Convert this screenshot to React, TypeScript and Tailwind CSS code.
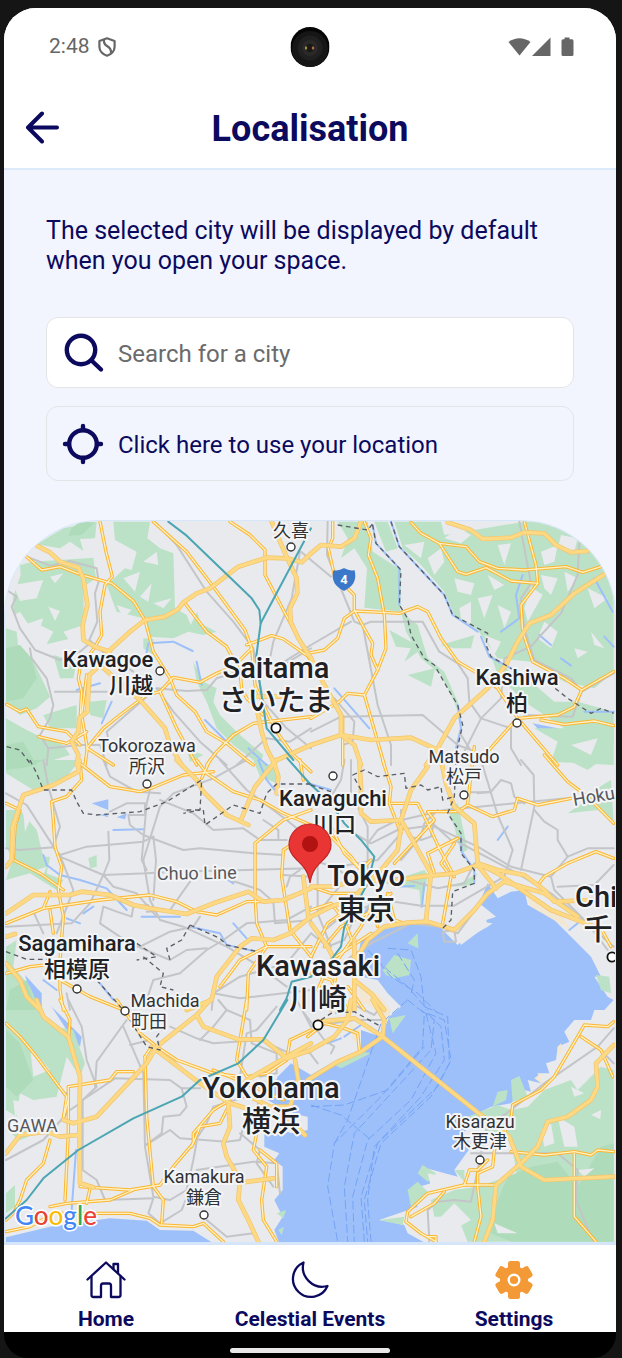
import React from "react";

type Tile = {
  x: number;
  y: number;
  green?: string[];
  forest?: string[];
  land?: string[];
  water?: string[];
  beige?: string[];
  river?: string[];
  rail?: string[];
  road?: string[];
  highway?: string[];
  bullet?: string[];
  border?: string[];
  ferry?: string[];
};

// Each tile is drawn on its own 933-unit grid, three units to a map pixel.
const tiles: Tile[] = [
  {
    x: 0,
    y: 1545,
    green: [
      "110,88 190,40 290,20 285,70 240,72 250,108 210,80 180,100",
      "340,20 450,20 442,70 480,100 520,115 525,280 560,300 572,330 592,290 600,325 650,350 610,360 565,350 520,370 450,365 430,310 350,290 320,210 375,160 395,165 410,110 345,75",
      "60,150 100,140 280,128 288,190 250,215 252,330 190,350 205,372 140,388 160,350 120,330 90,335 60,290 42,300 38,250 62,180",
      "18,340 50,350 55,400 95,430 130,500 150,545 110,580 60,600 18,560",
      "160,420 230,440 220,490 180,490",
      "270,560 320,555 310,610 270,600",
      "130,600 230,570 230,640 150,640",
      "18,610 70,640 110,660 190,690 210,720 110,750 18,750",
      "580,440 610,500 650,520 640,560 660,600 720,660 790,720 780,750 700,690 650,640 620,560 590,500",
      "560,700 610,720 570,740",
      "430,370 460,372 460,420 430,400",
    ],
    forest: ["18,400 60,390 95,430 110,490 70,550 18,560", "215,40 240,20 285,22 245,60 205,62", "18,690 70,680 110,750 18,750"],
    land: [
      "40,210 130,195 110,250 60,258",
      "145,275 180,288 165,318",
      "370,190 420,170 405,230",
      "420,245 455,205 445,260",
      "430,140 470,110 475,150",
      "460,265 515,250 490,280",
      "70,330 130,310 110,370",
      "150,185 190,175 165,205",
      "350,270 395,285 370,310",
    ],
    river: ["438,422 445,385 520,380 578,408", "590,440 605,510", "335,560 305,625", "615,615 690,690", "745,700 800,750", "230,525 300,505"],
    rail: [
      "20,225 50,245 35,275 60,340 105,405 180,435 240,410 270,385",
      "80,125 150,152 210,138 290,160 296,200 285,235 292,320 268,375 320,420 400,470",
      "470,25 530,90 620,230 700,320 760,400 790,560 860,640 933,700",
      "90,400 95,430 140,490 160,570 150,610 120,660 145,700 140,750",
      "165,530 320,530",
      "470,520 560,528 620,525 650,490 700,475",
      "440,545 320,650 330,690",
      "470,520 520,590 600,680 680,750",
      "900,110 875,250 820,380 800,480",
      "145,700 240,690 300,690 320,750",
      "710,750 800,670 870,680 933,640",
      "850,450 933,400",
    ],
    road: [
      "300,20 318,110 337,185 315,210 300,290 305,360 285,395 240,460 235,490 245,530 240,620",
      "80,125 125,165 180,155 240,178 335,205 400,258 435,315 460,410 510,490 530,540 585,590 620,650 680,685 740,735 760,750",
      "460,20 560,110 640,215 735,345 755,400 765,510 800,590 830,650 880,720 933,770",
      "555,265 620,350 680,395 720,470 725,520 740,550 790,600",
      "690,20 750,60 795,105 795,180 850,285 933,440",
      "740,390 815,362 850,372 933,430",
      "755,400 700,455 650,475 600,502 520,487 480,530 440,540 360,600 310,640 260,700",
      "480,530 530,640 590,750",
      "260,480 245,600 262,700 255,750",
      "20,568 60,590 80,582 115,635 200,650 240,690",
      "115,665 200,685 260,650",
      "262,700 340,750",
      "620,750 650,710 700,660 760,625 933,605",
    ],
    highway: [
      "110,92 150,112 180,140 235,158 250,190 262,270 248,330 250,375 285,395 330,410",
      "933,115 905,142 860,130 800,128 715,155 630,220 590,235 550,262 535,282 495,305 435,315 390,350 330,405 300,450 268,480 262,590 238,610 235,650 215,680 235,720 230,750",
      "815,20 840,80 862,130 890,190 892,235 870,280 872,320 895,370 933,430",
      "300,450 340,485 420,555 460,600 495,640 510,690 545,750",
      "770,580 785,650 800,700 820,740 933,690",
      "770,545 850,545",
    ],
    bullet: ["505,20 560,62 755,250 778,285 782,325 768,430 780,510 800,640 880,735", "933,40 782,325"],
    border: ["20,695 60,705 90,745"],
  },
  {
    x: 933,
    y: 1545,
    green: [
      "80,20 170,20 185,110 270,165 268,290 160,278 168,160 130,100 90,130 110,70",
      "190,20 230,20 260,100 225,110",
      "250,20 390,20 400,60 640,20 830,20 880,130 908,230 908,470 850,520 760,500 660,440 560,430 500,345 430,300 400,230 330,150 275,100",
      "270,290 320,330 350,430 400,470 440,560 450,620 430,560 390,480 330,430 285,350",
      "235,345 335,400 280,440 300,400 255,395",
      "290,480 372,460 360,515",
      "390,390 490,360 480,400 430,400",
      "540,420 660,500 730,560 800,560 908,590 908,690 760,640 640,560 560,480",
      "670,640 908,640 908,750 720,740 740,680",
    ],
    land: [
      "280,90 340,80 330,130",
      "350,130 390,100 400,140 370,180",
      "430,190 490,205 480,240 440,230",
      "445,280 480,260 480,330 450,310",
      "500,250 545,240 520,310",
      "530,180 580,210 550,225",
      "560,90 600,85 580,150",
      "690,110 740,90 730,140 700,150",
      "750,60 800,70 790,110 740,100",
      "690,180 740,190 720,240 700,220",
      "660,215 695,240 650,320 640,280",
      "760,170 800,190 770,230",
      "830,220 890,250 850,280",
      "700,320 740,350 720,400 680,370",
      "790,400 830,410 800,430",
      "840,350 880,400 850,390",
      "560,270 600,290 580,340",
      "520,360 570,380 550,420",
      "400,70 440,40 480,60 450,85",
      "580,450 650,490 630,520",
      "780,690 860,670 840,720",
    ],
    water: ["665,625 740,640 800,665 825,690 760,672 690,650", "670,340 690,340 685,365"],
    river: [
      "240,20 265,95 330,165 400,240 425,300 500,350",
      "185,30 195,85 265,160 265,270",
      "440,570 450,640 430,720",
      "510,365 535,425 600,460",
      "635,180 615,240 625,310 570,350",
      "685,360 720,390",
      "850,190 905,290",
      "880,365 908,395",
      "750,430 780,452",
      "70,520 175,640",
      "820,590 908,590",
    ],
    rail: [
      "50,20 48,120 110,270 130,320 155,330 200,570 240,690 240,750",
      "-30,110 60,185",
      "-80,440 0,390 120,320",
      "155,330 180,320 335,320 385,410 440,445 470,490 475,560 510,610 600,640 600,700 630,750",
      "805,85 800,180 750,295 690,360 660,395 580,430 570,550 510,610 460,710",
      "625,20 660,205 630,250 640,340 670,435 780,490 812,530 785,605 640,600",
      "0,650 90,605 335,600 440,690 480,705",
      "70,550 130,620 125,680 95,690",
      "812,530 908,475",
      "450,660 475,700",
    ],
    road: [
      "65,20 65,70 52,100 70,180 130,240 130,285 165,350 185,385 180,420 200,465 160,540 180,610 220,750",
      "160,20 180,70 172,120 200,190 220,300 225,400 200,465",
      "-10,415 40,405 80,370 100,310 130,288 215,292 265,295 320,275 350,290 390,370 440,440 500,475 560,520 620,610 740,750",
      "300,22 330,55 385,85 465,95 505,140 560,160 640,165 765,155 815,172 870,155",
      "385,85 440,170 465,178 525,158 600,198 680,205 675,150 640,20",
      "680,205 630,270 635,350 665,440 760,490 812,525 908,470",
      "812,525 790,575 740,600 620,610",
      "530,710 610,620",
      "690,615 760,628 850,618 908,632",
      "160,540 110,535 85,560 0,610",
      "95,605 95,750",
    ],
    highway: [
      "0,115 30,90 90,95 130,70 150,20",
      "410,22 480,45 515,72 600,68 640,52 700,55 735,90 780,112 830,108",
      "880,178 790,235 720,300 655,325 620,380 585,450 530,520 430,610 380,700 345,750",
      "0,430 40,510 90,600 90,660 180,675 300,668 370,700",
      "0,690 90,660 130,690 150,750",
    ],
    border: [
      "80,30 170,45 190,20",
      "185,30 195,85 270,165 265,270 290,310 300,360 340,430 370,450 410,520 440,570 455,630 430,740",
      "240,20 265,95 400,240 425,300 530,355 525,390 540,425 600,460 720,510 770,550 840,595 870,580 908,595",
    ],
  },
  {
    x: 0,
    y: 2280,
    green: [
      "18,0 240,0 200,50 100,90 18,40",
      "18,150 60,150 110,210 130,290 40,300 18,260",
      "40,290 150,290 140,340 190,360 170,390 90,340 18,360",
      "265,295 290,285 290,320 270,325",
      "18,560 50,540 40,620 90,680 120,750 18,750",
      "760,0 830,20 830,70 780,50",
    ],
    forest: ["18,0 130,0 90,20 18,30", "30,690 80,660 110,750 18,750"],
    land: ["70,160 90,180 75,215", "110,330 140,320 130,345"],
    water: ["275,130 325,118 325,150 300,140", "300,165 320,160 325,172", "350,172 380,160 375,178", "75,645 125,700 125,750 105,740"],
    river: ["130,285 140,315 180,345 240,360 320,385 380,450", "425,470 540,470", "570,500 660,520 680,555 770,575", "700,490 740,535", "340,210 430,208", "200,475 240,490", "130,660 170,690", "775,0 800,60 840,110", "670,350 700,370", "300,670 340,720", "250,460 280,440"],
    rail: [
      "18,100 80,135 180,290 310,345 440,340 520,335 930,325",
      "130,0 145,80 180,200 160,260",
      "18,265 60,270 160,262 180,285",
      "180,285 260,260 430,245 460,230",
      "310,0 330,50 410,95 480,100",
      "740,0 640,55 520,100 480,140 430,300 450,420 480,480 550,500 680,560 780,620 860,680",
      "450,90 440,130 425,300 440,330",
      "325,215 328,300 310,345 270,430 215,490 18,500",
      "480,120 580,160 640,210 730,205 780,240 860,240",
      "330,155 380,130 435,130 435,165 385,165 390,195 430,225 550,270 600,265 760,280 850,285",
      "180,285 220,390 170,520",
      "310,345 340,380 410,400 470,470",
      "310,440 350,455 395,470 400,440 445,435",
      "310,440 300,490 390,550 510,600 560,570 620,565",
      "570,365 510,450 440,455",
      "933,440 860,480 740,490 670,540 620,570 540,640 460,660 440,720",
      "660,0 740,90 860,180 933,240",
      "690,360 780,390 820,425 825,490 933,480",
      "460,230 468,300 460,420",
      "600,470 580,500 510,515 420,560",
      "790,180 835,210 835,240",
      "635,750 640,700 720,650 860,610 933,520",
      "640,700 720,715 933,690",
      "130,520 100,455",
      "200,700 210,750",
      "850,345 933,350",
      "860,380 870,350 900,330",
    ],
    road: [
      "240,5 245,60 200,110 155,125 160,180 165,260 185,320 175,390 190,470 180,600 180,690 190,750",
      "240,10 330,80 420,95 460,82 550,45 640,35",
      "18,130 60,150 45,200 40,300 120,340 190,390",
      "18,490 130,445 300,420 450,405 530,425 590,455 650,465 740,425 790,425",
      "590,0 620,40 700,95 780,120 850,160 933,195",
      "630,0 605,55",
      "933,150 850,180 765,250 765,400 770,490 800,560 745,640 740,750",
      "880,250 850,270 845,350 870,510 933,590",
      "18,640 90,620 180,610",
      "180,660 270,710 370,750",
      "130,445 150,395",
      "160,520 150,450",
      "933,560 800,560 720,600 660,680",
      "900,0 910,60",
    ],
    highway: [
      "238,0 235,35 160,75 70,105 38,200 35,300 18,320",
      "18,460 100,405 210,405 245,395 330,405 400,435 450,445 560,462 640,430 745,395 790,425 850,420 933,385",
      "530,0 590,60 610,95 680,165 745,195",
      "725,175 765,80 830,0",
      "820,0 835,50 830,100",
      "933,470 870,520 820,540 755,535 720,560 650,650 635,720 560,750",
      "18,530 45,522",
      "18,610 60,660 80,710 120,750",
      "910,350 925,470",
    ],
    bullet: ["862,-5 933,75", "933,650 875,665 860,715 840,750"],
    border: [
      "90,0 110,40 130,90 215,90 230,125 250,160 290,165 420,155 500,125 605,60 600,150 550,160",
      "560,150 610,150 615,195 700,135 780,160 800,100 830,72 933,72",
      "18,575 80,598 150,598",
      "570,495 660,535 680,555 775,575",
      "570,495 545,540 500,565 510,600",
      "410,550 470,590 410,600",
      "430,590 490,640 480,680 520,690",
      "290,660 370,750",
    ],
  },
  {
    x: 933,
    y: 2280,
    green: [
      "770,160 830,120 850,90 900,60 908,190 860,150",
      "770,0 870,0 830,30",
      "410,150 440,130 470,270 450,280 430,200",
      "220,370 340,330 350,345 330,450 325,390",
      "430,380 500,340 480,375",
    ],
    land: ["690,50 730,55 700,90"],
    river: ["450,230 452,275 490,330 490,370", "333,440 340,370", "560,240 590,200", "250,380 310,378", "-10,70 60,90", "775,510 800,490"],
    rail: [
      "100,0 90,60 60,110 0,120",
      "0,210 130,220 180,250 260,210 370,195 430,250",
      "170,250 200,210 250,185 400,150 610,130 800,112",
      "370,200 500,260 600,320 720,350 730,390 850,510 908,560",
      "430,240 600,330 720,400 830,490 890,570",
      "130,350 270,355 380,385 460,370 490,310",
      "250,425 330,437 430,437 580,350",
      "510,0 560,165 605,270 580,350",
      "630,0 668,45 670,140 630,330",
      "500,100 540,95 570,60 600,70 610,110 640,130",
      "670,150 700,185 740,210 740,240 770,290 720,350",
      "770,290 830,265 908,265",
      "908,315 850,375 740,380",
      "470,97 540,97",
      "400,545 395,515 430,510 435,545 400,545",
      "180,550 300,490 390,500 440,520 500,440 580,360",
      "120,0 120,100 170,200 170,330",
      "270,150 270,220 200,300 80,320",
      "0,300 70,320 110,350 20,460",
      "20,300 20,460 60,560",
      "300,230 330,240 360,230 370,180",
      "0,520 50,560 100,540 150,430",
      "0,600 30,520 90,470 220,420",
      "60,640 120,590 180,550",
      "380,150 340,190 330,230 270,300",
    ],
    road: [
      "215,0 240,80 235,130 270,220",
      "240,130 320,130 350,190 385,265 430,350",
      "250,310 370,180 350,155 440,155 470,135 545,170 610,150 620,115 680,135 780,115",
      "490,-40 470,130",
      "700,-15 770,65 830,110 908,190",
      "430,250 390,310 420,350 395,490",
      "370,340 350,280 440,235",
      "908,295 855,275 770,310 700,350 680,375",
      "850,470 900,560",
      "0,200 60,230 120,290 150,330",
      "60,200 100,280 150,330 180,300",
      "0,380 60,400 130,400",
      "40,560 90,500 170,460 240,400",
      "0,450 60,430 100,480 130,560",
      "60,750 80,600 150,500 190,420",
      "0,590 50,490 120,440",
      "20,690 60,600 120,560 180,520",
      "230,400 250,480 280,490",
      "180,430 200,500",
      "0,640 60,660 110,750",
      "110,680 160,750",
    ],
    highway: [
      "130,750 130,660 140,590 170,540 220,500 290,488 350,485 400,500 430,510 490,450 530,400 580,365 700,400 800,470",
      "145,0 150,80 150,160 180,185 270,180 300,90 350,20",
      "390,0 405,70 430,140 490,190 500,310 560,330 640,345 700,390 730,425 850,420",
      "270,180 310,250 360,340 345,480",
      "130,365 260,360 330,350 430,340 500,315 555,385",
      "0,380 60,380 130,365",
      "270,200 260,270 210,330 160,380 120,420",
      "0,490 50,560 80,620",
      "130,540 130,660 180,700 220,750",
      "0,470 60,440 120,420",
      "500,310 560,340 720,450 850,500",
    ],
    bullet: ["-10,65 60,130 100,190 150,240 190,290 170,370 100,500 90,560 60,600", "0,650 20,630"],
    border: [
      "125,45 160,30 200,50 280,40 285,85 330,75 350,90 390,80 395,120 430,110",
      "435,0 430,110 410,160 450,220 450,280 490,330 490,370 425,395 420,480 395,505",
      "150,90 125,45",
      "0,75 60,95",
    ],
  },
  {
    x: 0,
    y: 3000,
    green: [
      "18,0 100,0 160,80 220,90 255,190 240,230 200,170 170,290 100,300 60,280 50,350 18,330",
      "18,580 45,555 45,620 18,640",
      "18,390 60,380 110,400 60,420",
      "830,640 858,630 850,655",
      "835,690 852,680 845,705",
    ],
    forest: ["18,90 60,130 100,240 50,290 18,260"],
    land: ["90,140 150,210 100,230", "40,300 80,310 45,350"],
    water: ["18,712 150,680 330,655 440,662 480,690 580,692 640,730 18,730", "155,20 245,110 240,140 200,90"],
    river: ["228,450 215,630", "200,280 195,330"],
    rail: [
      "205,0 245,80 260,180 290,260 248,300 248,510 290,540 315,600",
      "380,60 290,185 285,260",
      "370,80 430,220 435,440 460,590 510,600 560,570 580,480 590,425",
      "248,300 345,235 510,240 545,265 600,265",
      "545,265 560,320 540,345 490,350 485,400 435,437",
      "435,437 510,390 540,415 680,425 720,420 730,380 820,240",
      "590,510 760,485 830,490 840,580",
      "315,600 460,595 445,640 480,670 545,630 570,570",
      "620,660 680,710 760,700",
      "510,80 590,115 640,130 780,120 870,160",
      "720,230 740,100 770,90 830,20",
      "18,480 130,420 210,330 240,310",
      "655,0 680,30 640,80 600,120",
      "680,30 750,60 755,130 830,160 830,220 780,230",
      "720,400 780,450 770,490 820,560",
      "390,135 450,120",
      "580,430 620,370 640,320 740,290",
      "890,0 933,80",
    ],
    road: [
      "180,0 210,60 205,120",
      "18,70 60,110 110,170 200,290 190,355",
      "205,260 330,240 350,215 400,215",
      "435,170 440,350 460,560",
      "205,260 205,400 195,600",
      "150,420 130,490 80,540 60,600 40,640 18,660",
      "240,560 390,570 480,555 520,500 580,430 580,400 640,330 690,300",
      "575,440 600,380 660,370 680,330",
      "150,620 200,610 330,600 400,570",
      "260,610 270,565",
      "18,695 90,680 160,640 390,640 450,655 480,675 580,680 610,670 670,725",
      "460,560 490,600 485,670",
      "740,0 710,180 740,230 800,220 860,180 870,120 933,90",
      "350,0 420,100 470,140 530,180 640,220 720,230",
      "770,400 760,450 800,500 785,600 790,660 830,725",
      "780,450 830,490 830,560",
      "640,210 760,260 850,300",
      "435,170 455,140",
      "190,355 205,300",
    ],
    highway: [
      "110,0 130,50 205,110 240,230 238,400 240,550 280,562",
      "630,0 590,45 470,140 440,190 290,350 220,370 190,360",
      "590,45 610,80 715,118 790,118 860,175 933,150",
      "455,140 600,250 690,310 740,325",
      "18,460 60,405 140,395 180,410 235,405",
      "685,310 690,380 670,430 680,470 720,540 715,600 745,660 775,725",
      "720,548 820,535",
      "740,240 860,170 933,130",
      "885,180 895,240 870,320 820,320",
      "750,290 850,340 915,405",
    ],
    bullet: ["862,0 790,120 715,190 600,240 545,290 400,355 235,450 130,535 80,600 18,655"],
    border: ["390,60 440,140 480,150 470,110 500,70"],
  },
  {
    x: 933,
    y: 3000,
    water: [
      "145,-150 150,-180 190,-205 300,-230 385,-225 400,-205 440,-165 450,-175 530,-220 545,-230 510,-235 555,-250 505,-290 530,-350 560,-305 600,-325 640,-330 650,-285 720,-250 790,-180 840,-130 870,-70 850,-70 890,-10 908,0 880,30 850,30 840,60 790,60 760,95 775,125 740,140 735,180 705,190 715,220 680,220 690,250 650,240 660,275 640,270 600,310 540,320 480,350 460,400 480,440 430,510 440,530 330,500 360,550 290,570 320,620 205,660 280,675 290,700 345,730 -95,730 -110,690 -85,650 -110,600 -85,570 -85,500 -110,480 -95,460 -140,440 -140,400 -100,380 -60,400 -10,390 -10,350 -60,340 -130,300 -100,230 -60,190 0,225 60,190 150,150 150,90 210,110 235,50 270,20 230,-20 200,-60 150,-70 140,-100",
      "160,-265 180,-300 190,-240 150,-230",
    ],
    green: [
      "545,320 560,275 590,270 585,300",
      "600,240 625,228 650,290 605,305",
      "450,380 470,350 560,315 600,330 650,320 700,270 780,240 800,270 870,200 908,210 908,725 470,725 440,650 370,650 360,600 430,570 500,560 560,540 620,540 600,420 540,410 500,370",
      "335,495 375,520 350,545 320,520",
      "290,570 320,545 350,575 300,620",
      "205,660 280,650 275,675",
      "235,55 285,45 245,100",
      "60,190 150,155 180,160 90,205",
      "215,-90 250,-135 300,-120 295,-75 250,-65 225,-75",
      "290,-170 320,-200 322,-155",
      "855,-75 895,-70 900,-20 870,-30",
      "430,510 460,510 460,545",
    ],
    forest: ["560,600 590,530 660,500 740,485 800,560 870,440 908,430 908,725 600,725 540,700"],
    land: [
      "350,520 440,540 410,575 360,560",
      "840,345 870,330 868,358",
      "740,350 790,380 800,440 760,440",
      "550,670 620,700 560,700",
      "800,510 850,505 820,530",
      "780,260 820,280 790,290",
      "480,450 540,430 540,520 490,540",
      "380,660 430,610 480,660 410,700",
      "690,390 720,370 730,430 700,440",
      "440,-190 520,-260 530,-225 450,-165",
    ],
    beige: ["145,-40 200,-20 240,30 225,70 180,20 140,0", "740,140 750,130 755,155 740,165", "690,220 670,235 690,250", "650,-310 740,-270 780,-210 660,-280", "110,60 150,90 130,130"],
    river: ["50,130 90,115", "100,110 150,75"],
    ferry: [
      "290,0 340,40 335,140 210,290 70,430 50,560 80,725",
      "330,30 370,60 360,150 250,270 130,400 100,560 110,725",
      "350,40 400,60 420,180 380,260 200,430 150,590 160,725",
      "350,40 390,80 400,180 330,290 190,440 170,600 180,725",
      "340,20 410,50 415,190 360,290 210,430 160,600 170,725",
      "345,40 375,160 300,300 170,420 125,590 130,725",
      "0,315 90,345 180,420",
      "0,320 100,315 230,270 340,140",
      "290,0 210,70 110,360 70,430",
      "170,-150 230,-90 290,-40 350,30",
      "180,-140 240,-70 320,-20 380,40",
      "230,-155 300,-150 330,-70 340,20",
      "260,-140 310,-60 300,-20",
    ],
    rail: [
      "908,85 860,140 700,250 600,330 530,380 510,460 500,510 480,605 430,600 380,605 350,630 355,725",
      "480,460 740,460 800,510 795,600 845,720",
      "860,140 908,190",
      "-20,40 40,120 70,140 60,160",
      "0,80 130,60 210,60",
      "-10,150 20,190",
      "140,20 190,45 210,20",
    ],
    road: [
      "908,65 890,80 820,75 730,230 690,270 605,315 600,360 550,450 545,500 500,520 500,560 510,650 490,725",
      "810,110 870,150 905,230",
      "555,555 460,555 350,580 290,635 285,665 330,700 375,725",
      "400,575 370,610 300,650",
      "600,455 700,465 790,455 840,465 860,450 908,455",
      "790,460 790,650 855,725",
      "460,555 475,510 500,510 530,480",
      "-10,110 40,70 100,85 140,100 145,150",
      "350,710 375,710 375,725",
    ],
    highway: [
      "-10,240 80,185 150,155 215,110 220,60 185,0",
      "20,65 130,55 215,110 510,345 595,410 630,500 700,540 908,530",
      "908,135 855,190 860,260 840,300 770,350 710,365 680,440 630,490 555,555 545,660 520,725",
      "-10,155 70,110 110,60 120,0",
    ],
    border: ["30,60 60,40 130,35 210,80"],
  },
];

type Layer = { key: keyof Omit<Tile, "x" | "y">; stroke?: string; width?: number; fill?: string; dash?: string };

const layers: Layer[] = [
  { key: "water", fill: "#9dc0fa" },
  { key: "green", fill: "#bbe2c6" },
  { key: "forest", fill: "#aedcba" },
  { key: "land", fill: "#e8eaed" },
  { key: "beige", fill: "#f1e7d3" },
  { key: "river", stroke: "#9dc0fa", width: 6 },
  { key: "ferry", stroke: "#74a3f5", width: 3, dash: "26 10" },
  { key: "rail", stroke: "#c3c5c8", width: 6 },
  { key: "road", stroke: "#fbb631", width: 10 },
  { key: "road", stroke: "#fff1c4", width: 4 },
  { key: "highway", stroke: "#f2c46c", width: 14 },
  { key: "highway", stroke: "#fdd983", width: 10 },
  { key: "bullet", stroke: "#4ba5b3", width: 6 },
  { key: "border", stroke: "#5a5f66", width: 4, dash: "14 11" },
];

type Label = { text: string; x: number; y: number; kind: "city" | "town" | "place" | "line"; rotate?: number; start?: boolean };

const labels: Label[] = [
  { text: "久喜", x: 291, y: 537, kind: "place" },
  { text: "Kawagoe", x: 108, y: 667, kind: "town" },
  { text: "川越", x: 131, y: 693, kind: "town" },
  { text: "Saitama", x: 276, y: 678, kind: "city" },
  { text: "さいたま", x: 276, y: 711, kind: "city" },
  { text: "Kashiwa", x: 517, y: 685, kind: "town" },
  { text: "柏", x: 517, y: 711, kind: "town" },
  { text: "Tokorozawa", x: 147, y: 752, kind: "place" },
  { text: "所沢", x: 147, y: 773, kind: "place" },
  { text: "Matsudo", x: 464, y: 763, kind: "place" },
  { text: "松戸", x: 464, y: 783, kind: "place" },
  { text: "Kawaguchi", x: 333, y: 806, kind: "town" },
  { text: "川口", x: 334, y: 832, kind: "town" },
  { text: "Hoku", x: 574, y: 806, kind: "line", rotate: -10, start: true },
  { text: "Chuo Line", x: 157, y: 880, kind: "line", rotate: -1, start: true },
  { text: "Tokyo", x: 366, y: 886, kind: "city" },
  { text: "東京", x: 366, y: 920, kind: "city" },
  { text: "Chi", x: 575, y: 907, kind: "city", start: true },
  { text: "千", x: 598, y: 940, kind: "city" },
  { text: "Sagamihara", x: 77, y: 951, kind: "town" },
  { text: "相模原", x: 77, y: 977, kind: "town" },
  { text: "Kawasaki", x: 318, y: 976, kind: "city" },
  { text: "川崎", x: 318, y: 1010, kind: "city" },
  { text: "Machida", x: 165, y: 1007, kind: "place" },
  { text: "町田", x: 149, y: 1028, kind: "place" },
  { text: "Yokohama", x: 271, y: 1098, kind: "city" },
  { text: "横浜", x: 271, y: 1132, kind: "city" },
  { text: "Kisarazu", x: 480, y: 1128, kind: "place" },
  { text: "木更津", x: 480, y: 1148, kind: "place" },
  { text: "Kamakura", x: 204, y: 1183, kind: "place" },
  { text: "鎌倉", x: 204, y: 1204, kind: "place" },
  { text: "GAWA", x: 7, y: 1132, kind: "line", start: true },
];

const labelStyles = {
  city: "text-[29px] font-medium fill-[#202124]",
  town: "text-[22px] font-medium fill-[#202124]",
  place: "text-[18px] fill-[#303236]",
  line: "text-[18px] fill-[#55585c]",
};

const stations: [number, number][] = [
  [291, 547], [160, 671], [517, 723], [147, 784], [333, 776], [464, 795], [77, 989], [125, 1011], [480, 1160], [204, 1215],
];
const capitals: [number, number][] = [[276, 728], [318, 1025], [612, 957]];

function CityMap() {
  return (
    <svg
      viewBox="5 521 610 721"
      preserveAspectRatio="xMidYMid slice"
      className="block aspect-[610/721] w-full bg-[#e8eaed] font-['Roboto','Noto_Sans_CJK_JP',sans-serif]"
      role="img"
      aria-label="Map of Tokyo"
    >
      <g transform="scale(0.333333)" strokeLinejoin="round">
        {layers.map((layer, i) => (
          <g
            key={i}
            fill={layer.fill ?? "none"}
            stroke={layer.stroke ?? "none"}
            strokeWidth={layer.width}
            strokeDasharray={layer.dash}
            strokeLinecap={layer.dash ? "butt" : "round"}
          >
            {tiles.map((tile) => (
              <g key={`${tile.x}-${tile.y}`} transform={`translate(${tile.x} ${tile.y})`}>
                {(tile[layer.key] ?? []).map((points, j) =>
                  layer.fill ? <polygon key={j} points={points} /> : <polyline key={j} points={points} />,
                )}
              </g>
            ))}
          </g>
        ))}
      </g>
      <path d="M334 571q5 1 10-2q5 3 10 2q3 13-10 19q-13-6-10-19z" fill="#3b78c9" stroke="#3b78c9" strokeWidth="1.5" strokeLinejoin="round" />
      <text x="344" y="584" textAnchor="middle" className="fill-white text-[13px] font-bold">4</text>
      {stations.map(([x, y]) => (
        <circle key={`${x}-${y}`} cx={x} cy={y} r="4" fill="#fff" stroke="#333" strokeWidth="1.4" />
      ))}
      {capitals.map(([x, y]) => (
        <circle key={`${x}-${y}`} cx={x} cy={y} r="4.6" fill="#fff" stroke="#111" strokeWidth="1.8" />
      ))}
      {labels.map((l) => (
        <text
          key={l.text}
          x={l.x}
          y={l.y}
          textAnchor={l.start ? "start" : "middle"}
          transform={l.rotate ? `rotate(${l.rotate} ${l.x} ${l.y})` : undefined}
          stroke="#f4f5f7"
          strokeWidth="4"
          strokeLinejoin="round"
          paintOrder="stroke"
          className={labelStyles[l.kind]}
        >
          {l.text}
        </text>
      ))}
      <path
        d="M310 883C308 870 303 866 296 859C291 854 289 850 289 845A21 21 0 0 1 331 845C331 850 329 854 324 859C317 866 312 870 310 883Z"
        fill="#ea3535"
        stroke="#c22424"
        strokeWidth="1.2"
      />
      <circle cx="310" cy="844" r="8" fill="#b11313" />
      <text
        x="15"
        y="1225"
        stroke="#fff"
        strokeWidth="3"
        strokeLinejoin="round"
        paintOrder="stroke"
        className="font-['Lato',sans-serif] text-[26px] font-medium"
      >
        <tspan fill="#4285f4">G</tspan>
        <tspan fill="#ea4335">o</tspan>
        <tspan fill="#fbbc04">o</tspan>
        <tspan fill="#4285f4">g</tspan>
        <tspan fill="#34a853">l</tspan>
        <tspan fill="#ea4335">e</tspan>
      </text>
    </svg>
  );
}

function StatusBar() {
  return (
    <div className="relative flex h-[78px] items-center justify-between pr-[42px] pl-[45px] text-[#666]">
      <div className="flex items-center gap-2">
        <span className="text-[21px]">2:48</span>
        <svg width="18" height="20" viewBox="0 0 18 20" fill="none" stroke="currentColor" strokeWidth="2.2" strokeLinejoin="round" aria-hidden="true">
          <path d="M9 1.3L16.6 4V10C16.6 14.3 13 17.7 9 18.8C5 17.7 1.4 14.3 1.4 10V4Z" />
          <path d="M6 2.5Q5.5 7 9 9Q13.500 11.500 13 16" />
        </svg>
      </div>
      <svg className="absolute top-[19px] left-1/2 -translate-x-1/2" width="39" height="40" viewBox="0 0 39 40" aria-hidden="true">
        <rect width="39" height="40" rx="19.500" fill="#050505" />
        <rect x="1.500" y="4" width="36" height="36" rx="18" fill="#161616" />
        <circle cx="19.500" cy="21" r="12.500" fill="#202020" />
        <circle cx="19.500" cy="21" r="8" fill="#2b2928" />
        <circle cx="19.500" cy="21" r="4" fill="#181818" />
        <ellipse cx="15.500" cy="21" rx="1.200" ry="1.800" fill="#9a9440" />
        <ellipse cx="22.500" cy="21" rx="1.200" ry="1.800" fill="#b8693f" />
      </svg>
      <svg width="66" height="20" viewBox="0 0 66 20" fill="currentColor" aria-hidden="true">
        <path d="M0.500 5Q11.500 -2.500 22.500 5L11.500 18.500Z" />
        <path d="M42.500 0.500V19H24Z" />
        <path d="M56.500 0.500H61.500V2.300H64Q65.500 2.300 65.500 4V17.500Q65.500 19 64 19H55Q53.500 19 53.500 17.500V4Q53.500 2.300 55 2.300H56.500Z" />
      </svg>
    </div>
  );
}

function HomeIcon() {
  return (
    <svg width="40" height="40" viewBox="0 0 40 40" fill="none" stroke="currentColor" strokeWidth="2.300" strokeLinecap="round" strokeLinejoin="round" aria-hidden="true">
      <path d="M1.500 19.500L20 2.500L38.500 19.500" />
      <path d="M5.500 16.500V35Q5.500 37 7.500 37H15V26Q15 23.500 17 23.500H23Q25 23.500 25 26V37H32.500Q34.500 37 34.500 35V16.500" />
      <path d="M27.500 9V4H32V13" />
    </svg>
  );
}

function MoonIcon() {
  return (
    <svg width="40" height="40" viewBox="0 0 40 40" fill="none" stroke="currentColor" strokeWidth="2.300" strokeLinejoin="round" aria-hidden="true">
      <path d="M13.500 2.500A18 18 0 1 0 37.500 26A19.500 19.500 0 0 1 13.500 2.500Z" />
    </svg>
  );
}

function GearIcon() {
  return (
    <svg width="40" height="40" viewBox="0 0 40 40" aria-hidden="true">
      <g fill="#f39a37">
        <circle cx="20" cy="20" r="14" />
        <rect x="14" y="1" width="12" height="38" rx="2.500" />
        <rect x="14" y="1" width="12" height="38" rx="2.500" transform="rotate(60 20 20)" />
        <rect x="14" y="1" width="12" height="38" rx="2.500" transform="rotate(120 20 20)" />
      </g>
      <circle cx="20" cy="20" r="5.300" fill="none" stroke="#fff" strokeWidth="2.400" />
    </svg>
  );
}

const navItems = [
  { label: "Home", icon: <HomeIcon /> },
  { label: "Celestial Events", icon: <MoonIcon /> },
  { label: "Settings", icon: <GearIcon /> },
];

export default function App() {
  return (
    <div className="min-h-screen bg-[#151515] pt-2 pr-1.5 pl-1 font-['Roboto','Noto_Sans_CJK_JP',sans-serif] text-[#0c0a5e]">
      <div className="overflow-hidden rounded-t-[32px] bg-[#f2f5fe]">
        <header className="border-b-2 border-[#dbe9fa] bg-white">
          <StatusBar />
          <div className="grid h-[82px] grid-cols-[72px_1fr_72px] items-center">
            <button type="button" aria-label="Back" className="flex justify-start pl-[21px]">
              <svg width="36" height="34" viewBox="0 0 36 34" fill="none" stroke="currentColor" strokeWidth="4" strokeLinecap="round" strokeLinejoin="round" aria-hidden="true">
                <path d="M17 3.500L3 17.500L17 31.500M3 17.500H32" />
              </svg>
            </button>
            <h1 className="pt-1 text-center text-[36px] leading-10 font-bold">Localisation</h1>
          </div>
        </header>

        <main>
          <div className="px-[42px] pt-[46px] pb-[39px]">
            <p className="text-[25px] leading-[30px]">The selected city will be displayed by default when you open your space.</p>
            <label className="mt-[41px] flex h-[71px] items-center gap-[13px] rounded-xl border border-[#e3e4e6] bg-white pl-4">
              <svg width="42" height="42" viewBox="0 0 42 42" fill="none" stroke="currentColor" strokeWidth="4.400" strokeLinecap="round" aria-hidden="true">
                <circle cx="18" cy="18" r="14.200" />
                <path d="M28.500 28.500L38 37.500" />
              </svg>
              <input
                type="text"
                aria-label="Search for a city"
                placeholder="Search for a city"
                className="min-w-0 flex-1 bg-transparent pt-0.5 text-2xl outline-none placeholder:text-[#6b6b6b]"
              />
            </label>
            <button type="button" className="mt-[18px] flex h-[75px] w-full items-center gap-[14px] rounded-xl border border-[#e3e4e6] pl-[15px] text-2xl">
              <svg width="42" height="42" viewBox="0 0 42 42" fill="none" stroke="currentColor" strokeWidth="4.400" strokeLinecap="round" aria-hidden="true">
                <circle cx="21" cy="21" r="13.800" />
                <path d="M21 3V7M21 35V39M3 21H7M35 21H39" />
              </svg>
              <span className="pt-0.5">Click here to use your location</span>
            </button>
          </div>
          <div className="overflow-hidden rounded-t-[96px] border-x border-t border-b-[3px] border-[#d5e6fb]">
            <CityMap />
          </div>
        </main>

        <nav className="grid grid-cols-3 bg-white pt-[15px]">
          {navItems.map((item) => (
            <a key={item.label} href="#" className="flex flex-col items-center gap-[7px] text-[21px] leading-[25px] font-bold whitespace-nowrap">
              {item.icon}
              {item.label}
            </a>
          ))}
        </nav>
      </div>
      <div className="flex h-[26px] items-end justify-center rounded-b-[24px] bg-black pb-[5px]">
        <div className="h-[5px] w-40 rounded-full bg-[#e9e7e7]" />
      </div>
    </div>
  );
}
